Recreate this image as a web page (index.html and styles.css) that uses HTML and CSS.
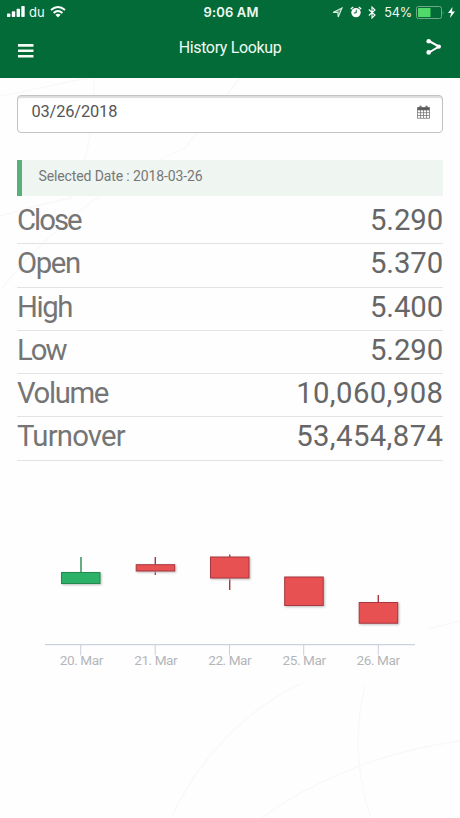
FILE: index.html
```html
<!DOCTYPE html>
<html lang="en">
<head>
<meta charset="utf-8">
<title>History Lookup</title>
<link rel="stylesheet" href="styles.css">
</head>
<body>
<div class="app">
  <svg class="backdrop" viewBox="0 0 460 740" aria-hidden="true">
    <path d="M0 18C35 12 66 3 90 0M94 0Q96 65 70 122M0 138Q34 128 70 120M2 210Q80 115 185 70L240 0M172 738C198 684 240 635 300 606M365 608C353 655 358 704 371 740M262 740C315 700 390 672 460 663M428 551L460 543"/>
  </svg>
  <header class="header">
    <div class="status">
      <div class="status-side">
        <svg class="signal" viewBox="0 0 18 12"><rect x="0" y="7.5" width="3.4" height="3.5" rx=".7"/><rect x="4.8" y="5.2" width="3.4" height="5.8" rx=".7"/><rect x="9.6" y="2.8" width="3.4" height="8.2" rx=".7"/><rect x="14.3" y="0" width="3.4" height="11" rx=".7"/></svg>
        <span class="carrier">du</span>
        <svg class="wifi" viewBox="0 0 16 12"><path d="M1 4.1Q8-2 15 4.1M3.6 6.9Q8 3 12.4 6.9"/><path class="solid" d="M5.4 8.8Q8 6.7 10.6 8.8L8 11.5Z"/></svg>
      </div>
      <span class="time">9:06 AM</span>
      <div class="status-side status-end">
        <svg class="location" viewBox="0 0 11 11"><path d="M1 5.5L10 1L6.2 10L5.8 5.4Z"/></svg>
        <svg class="alarm" viewBox="0 0 12 12"><circle cx="6" cy="6.6" r="4.7"/><path class="ears" d="M.8 3L3.2 1M8.8 1L11.2 3"/><path class="hands" d="M6.2 3.7V6.9H3.8"/></svg>
        <svg class="bluetooth" viewBox="0 0 8 13"><path d="M.8 3.5L7 9L4 12V1L7 4L.8 9.5"/></svg>
        <span class="percent">54%</span>
        <svg class="battery" viewBox="0 0 28 13"><rect class="shell" x=".5" y=".5" width="25" height="12" rx="2"/><rect class="charge" x="2" y="2" width="12.5" height="9" rx=".5"/><path class="cap" d="M26.8 4.5Q28 6.5 26.8 8.5Z"/></svg>
        <svg class="bolt" viewBox="0 0 7 11"><path d="M4.5 0L0 6H3L2 11L7 4.5H4Z"/></svg>
      </div>
    </div>
    <div class="navbar">
      <svg class="menu" viewBox="0 0 16 14"><path d="M0 1.4H15.5M0 6.8H15.5M0 12.2H15.5"/></svg>
      <h1 class="title">History Lookup</h1>
      <svg class="share" viewBox="0 0 16 18"><path d="M3 3L13 8.5L3 14.5"/><circle cx="2.7" cy="3.2" r="2.3"/><circle cx="12.8" cy="8.6" r="2.2"/><circle cx="2.7" cy="14.4" r="2.3"/></svg>
    </div>
  </header>
  <main class="content">
    <div class="date-input">
      <span>03/26/2018</span>
      <svg class="calendar" viewBox="0 0 13 14"><path class="top" d="M.5 2.2H12.5V5H.5Z"/><path d="M.5 2.5H12.5V13.3H.5ZM.5 5H12.5M.5 7.7H12.5M.5 10.5H12.5M3.5 5V13M6.5 5V13M9.5 5V13"/><path class="rings" d="M3.5 3.5V.8M9.5 3.5V.8"/></svg>
    </div>
    <div class="selected">Selected Date : 2018-03-26</div>
    <dl class="quotes">
      <div class="row"><dt class="tight">Close</dt><dd>5.290</dd></div>
      <div class="row"><dt class="snug">Open</dt><dd>5.370</dd></div>
      <div class="row"><dt class="snug">High</dt><dd>5.400</dd></div>
      <div class="row"><dt class="tight">Low</dt><dd>5.290</dd></div>
      <div class="row"><dt class="snug">Volume</dt><dd class="large">10,060,908</dd></div>
      <div class="row"><dt>Turnover</dt><dd class="large">53,454,874</dd></div>
    </dl>
    <svg class="chart" viewBox="0 0 426 140">
      <g transform="translate(-17 -540)">
        <g class="candle up"><path d="M81 557V572"/><rect x="61.5" y="572.5" width="38.5" height="11"/></g>
        <g class="candle down"><path d="M155.3 557V575"/><rect x="136.2" y="564.7" width="38.5" height="6.3"/></g>
        <g class="candle down"><path d="M229.7 554.5V590"/><rect x="210.5" y="557" width="38.5" height="21"/></g>
        <g class="candle down"><rect x="284.7" y="577" width="38.5" height="28.5"/></g>
        <g class="candle down"><path d="M378.3 595V603"/><rect x="359.2" y="602.5" width="38.5" height="20.7"/></g>
        <path class="axis" d="M45 644.7H415"/>
        <path class="ticks" d="M80.7 645V655.5M155.2 645V655.5M229.5 645V655.5M303.7 645V655.5M378.3 645V655.5"/>
        <g class="labels">
          <text x="59.8" y="665.3" textLength="43.5">20. Mar</text>
          <text x="134.2" y="665.3" textLength="43.5">21. Mar</text>
          <text x="208.2" y="665.3" textLength="43.5">22. Mar</text>
          <text x="282.5" y="665.3" textLength="43.5">25. Mar</text>
          <text x="356.5" y="665.3" textLength="43.5">26. Mar</text>
        </g>
      </g>
    </svg>
  </main>
</div>
</body>
</html>
```
FILE: styles.css
```css
* { box-sizing: border-box; }
body { margin: 0; background: #fefefe; font-family: Roboto, "Liberation Sans", sans-serif; }
svg { display: block; flex: none; }
.app { position: relative; width: 460px; height: 818px; overflow: hidden; }
.backdrop { position: absolute; top: 78px; left: 0; width: 460px; height: 740px; fill: none; stroke: #f7f8f7; stroke-width: 1.3; }

.header { position: relative; height: 78px; background: #036b38; color: #f0faf3; }
.status { display: grid; grid-template-columns: 1fr auto 1fr; align-items: center; height: 24px; padding: 0 5px 0 7px; font-family: Inter, sans-serif; }
.status-side { display: flex; align-items: center; }
.status-end { justify-content: flex-end; }
.signal { width: 18px; height: 12px; fill: #fff; }
.carrier { margin-left: 4px; font-size: 13px; }
.wifi { width: 16px; height: 12px; margin-left: 5px; fill: none; stroke: #fff; stroke-width: 2; }
.wifi .solid { fill: #fff; stroke: none; }
.time { font-size: 13px; font-weight: 600; letter-spacing: .15px; }
.location { width: 11px; height: 11px; fill: #d9eee055; stroke: #d9eee0; stroke-width: 1.1; }
.alarm { width: 12px; height: 12px; margin-left: 7px; fill: #fff; }
.alarm .ears { stroke: #fff; stroke-width: 1.4; }
.alarm .hands { fill: none; stroke: #036b38; stroke-width: 1; }
.bluetooth { width: 8px; height: 13px; margin-left: 6px; fill: none; stroke: #fff; stroke-width: 1.1; }
.percent { margin-left: 8px; font-size: 12.7px; letter-spacing: -.2px; }
.battery { width: 28px; height: 13px; margin-left: 4px; }
.battery .shell { fill: none; stroke: #70a786; }
.battery .charge { fill: #50da69; }
.battery .cap { fill: #70a786; }
.bolt { width: 7px; height: 11px; margin-left: 4px; fill: #fff; }

.navbar { display: flex; align-items: flex-start; justify-content: space-between; padding: 14px 18px 0; }
.menu { width: 16px; height: 14px; margin-top: 6px; stroke: #f3fbf2; stroke-width: 2.6; }
.title { margin: 0; font-size: 16px; font-weight: 400; line-height: 20px; letter-spacing: -.35px; }
.share { width: 16px; height: 18px; fill: #fff; stroke: #fff; stroke-width: 2; }
.share path { fill: none; }
.share circle { stroke: none; }

.content { position: relative; padding: 17px 17px 0; color: #666; }
.date-input { display: flex; justify-content: space-between; height: 37.5px; padding: 6px 12px 0 13.5px; border: 1px solid #c3c3c3; border-radius: 4px; background: #fff; box-shadow: inset 0 2px 1px #ddd; color: #555; font-size: 16.4px; line-height: 19px; letter-spacing: -.15px; }
.calendar { width: 13px; height: 14px; margin-top: 3px; fill: none; stroke: #777; stroke-width: .8; }
.calendar .top { fill: #555; stroke: none; }
.calendar .rings { stroke: #666; stroke-width: 2; }
.selected { height: 36px; margin-top: 27.5px; padding: 7px 0 0 16.5px; border-left: 5.5px solid #57b077; background: #eff5f1; color: #777; font-size: 14px; line-height: 19px; letter-spacing: -.12px; }
.quotes { margin: 5px 0 0; }
.row { display: flex; justify-content: space-between; height: 43.3px; border-bottom: 1px solid #e3e3e3; font-size: 29.3px; line-height: 39px; }
.row dt { color: #757575; letter-spacing: -.8px; }
.row dt.snug { letter-spacing: -1.4px; }
.row dt.tight { letter-spacing: -2px; }
.row dd { margin: 0; color: #666; letter-spacing: -.1px; }
.row dd.large { margin-right: -.4px; letter-spacing: .4px; }

.chart { width: 426px; height: 140px; margin-top: 79px; }
.candle rect { filter: drop-shadow(1px 1px 1px #bbb); }
.up { fill: #2bb168; stroke: #258850; }
.down { fill: #e85151; stroke: #a83740; }
.candle path { stroke-width: 1.4; }
.axis { stroke: #cbd2dd; stroke-width: 1.3; }
.ticks { stroke: #c4cbd7; stroke-width: .9; }
.labels { fill: #b3b6ba; font-size: 13.6px; }
```
